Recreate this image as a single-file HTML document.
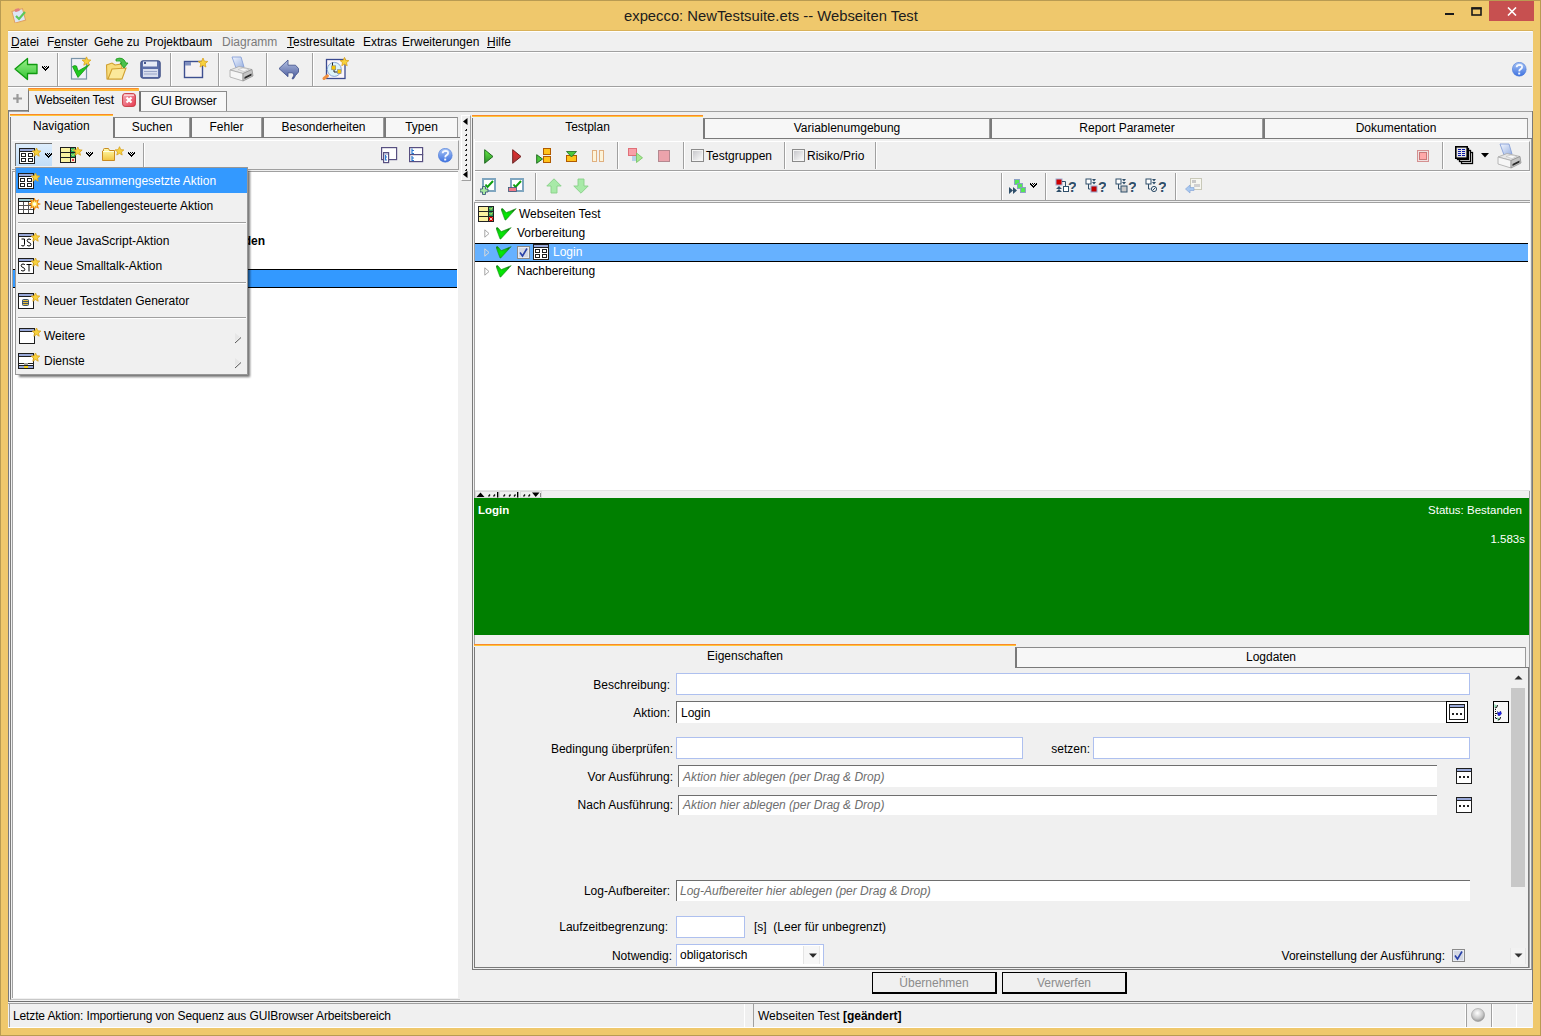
<!DOCTYPE html>
<html><head><meta charset="utf-8">
<style>
*{box-sizing:border-box;margin:0;padding:0}
html,body{width:1541px;height:1036px;overflow:hidden}
body{position:relative;background:#EFC86C;font-family:"Liberation Sans",sans-serif;font-size:12px;color:#000}
.a{position:absolute}
.t{position:absolute;white-space:nowrap;line-height:14px}
.hl{position:absolute;height:1px;background:#A0A0A0}
.vl{position:absolute;width:1px;background:#A0A0A0}
.tab{position:absolute;background:#F7F7F7;border-top:1px solid #8A8A8A;border-left:2px solid #7A7A7A;border-right:1px solid #9A9A9A;text-align:center}
.tabsel{position:absolute;background:#F0F0F0;border-top:2px solid #FDC63C;text-align:center}
.tabsel::before{content:"";position:absolute;left:0;right:0;top:-2px;height:1px;background:#FB8A2A}
.tabsel::after{content:"";position:absolute;left:0;right:0;top:0;height:1px;background:#EEF0F8}
.inp{position:absolute;background:#fff;border:1px solid #AEC0EF}
.inp2{position:absolute;background:#fff;border-top:1px solid #6E6E6E;border-left:1px solid #6E6E6E}
.sep{position:absolute;width:2px;border-left:1px solid #A0A0A0;border-right:1px solid #fff}
</style></head><body>
<!-- outer frame border -->
<div class="a" style="left:0;top:0;width:1541px;height:1036px;border:1px solid #B99B52"></div>

<!-- title bar -->
<div class="t" style="left:624px;top:7px;font-size:14.8px;line-height:18px;color:#1C1C1C">expecco: NewTestsuite.ets -- Webseiten Test</div>
<div class="a" style="left:1489px;top:1px;width:45px;height:20px;background:#C75050"></div>

<!-- client -->
<div class="a" style="left:8px;top:30px;width:1525px;height:998px;background:#F0F0F0;border-top:1px solid #D9B25A"></div>
<div class="a" style="left:8px;top:31px;width:1524px;height:1px;background:#fff"></div>

<!-- menu bar -->
<div class="hl" style="left:8px;top:51px;width:1524px;background:#A0A0A0"></div>
<div class="hl" style="left:8px;top:52px;width:1524px;background:#fff"></div>
<div class="t" style="left:11px;top:35px">Datei</div>
<div class="t" style="left:47px;top:35px">Fenster</div>
<div class="t" style="left:94px;top:35px">Gehe zu</div>
<div class="t" style="left:145px;top:35px">Projektbaum</div>
<div class="t" style="left:222px;top:35px;color:#7A7A7A">Diagramm</div>
<div class="t" style="left:287px;top:35px">Testresultate</div>
<div class="t" style="left:363px;top:35px">Extras</div>
<div class="t" style="left:402px;top:35px">Erweiterungen</div>
<div class="t" style="left:487px;top:35px">Hilfe</div>
<div class="a" style="left:11px;top:47px;width:8px;height:1px;background:#000"></div><div class="a" style="left:54px;top:47px;width:7px;height:1px;background:#000"></div><div class="a" style="left:287px;top:47px;width:7px;height:1px;background:#000"></div><div class="a" style="left:487px;top:47px;width:8px;height:1px;background:#000"></div>

<!-- toolbar -->
<div class="hl" style="left:8px;top:86px;width:1524px;background:#A0A0A0"></div>
<div class="hl" style="left:8px;top:87px;width:1524px;background:#fff"></div>

<!-- main tabs -->
<div class="hl" style="left:8px;top:111px;width:1524px;background:#A0A0A0"></div>

<!-- content container -->
<div class="a" style="left:8px;top:111px;width:1px;height:891px;background:#7A7A7A"></div>
<div class="a" style="left:1532px;top:111px;width:1px;height:891px;background:#7A7A7A"></div>

<!-- LEFT PANEL -->

<!-- left panel frame -->
<div class="a" style="left:10px;top:137px;width:450px;height:863px;border-left:1px solid #7A7A7A;border-bottom:1px solid #C8C8C8"></div>
<!-- left tabs -->
<div class="tabsel" style="left:10px;top:114px;width:103px;height:24px"><span class="t" style="left:23px;top:3px">Navigation</span></div>
<div class="a" style="left:10px;top:117px;width:1px;height:21px;background:#7A7A7A"></div>
<div class="tab" style="left:113px;top:117px;width:77px;height:21px"><span class="t" style="left:0;right:0;top:2px">Suchen</span></div>
<div class="tab" style="left:190px;top:117px;width:72px;height:21px"><span class="t" style="left:0;right:0;top:2px">Fehler</span></div>
<div class="tab" style="left:262px;top:117px;width:122px;height:21px"><span class="t" style="left:0;right:0;top:2px">Besonderheiten</span></div>
<div class="tab" style="left:384px;top:117px;width:74px;height:21px"><span class="t" style="left:0;right:0;top:2px">Typen</span></div>
<div class="hl" style="left:113px;top:137px;width:347px;background:#7A7A7A"></div>
<!-- left inner toolbar -->
<div class="a" style="left:12px;top:140px;width:447px;height:30px;border-top:1px solid #fff;border-right:1px solid #A0A0A0;border-bottom:1px solid #A0A0A0"></div>
<div class="a" style="left:15px;top:143px;width:37px;height:23px;background:linear-gradient(#DDEDFC,#C2DDF7);border-top:1px solid #707070;border-left:1px solid #707070"></div>
<div class="sep" style="left:143px;top:143px;height:26px"></div>
<!-- left tree -->
<div class="a" style="left:12px;top:171px;width:446px;height:827px;background:#fff;border-left:1px solid #A0A0A0;border-top:1px solid #A0A0A0"></div>
<div class="t" style="right:1276px;top:234px;font-weight:bold">Anhänge und Testfunktionen hinzuladen</div>
<div class="a" style="left:13px;top:269px;width:444px;height:19px;background:#3399FF;border-top:1px solid #000;border-bottom:1px solid #000"></div>
<!-- splitter -->
<div class="a" style="left:461px;top:115px;width:10px;height:66px;border-left:1px solid #fff;border-top:1px solid #fff;border-right:1px solid #A0A0A0;border-bottom:1px solid #A0A0A0"></div>


<!-- RIGHT PANEL -->

<!-- right panel outer frame -->
<div class="a" style="left:472px;top:138px;width:1060px;height:832px;border-left:1px solid #7A7A7A;border-right:1px solid #A0A0A0;border-bottom:1px solid #7A7A7A"></div>
<div class="a" style="left:474px;top:202px;width:1056px;height:766px;border-left:1px solid #A0A0A0;border-right:1px solid #A0A0A0;border-bottom:1px solid #A0A0A0"></div>
<div class="a" style="left:474px;top:139px;width:1px;height:62px;background:#fff"></div>
<!-- right tabs -->
<div class="tabsel" style="left:472px;top:115px;width:231px;height:24px"><span class="t" style="left:0;right:0;top:3px">Testplan</span></div>
<div class="a" style="left:472px;top:118px;width:1px;height:21px;background:#7A7A7A"></div>
<div class="tab" style="left:703px;top:118px;width:287px;height:21px"><span class="t" style="left:0;right:0;top:2px">Variablenumgebung</span></div>
<div class="tab" style="left:990px;top:118px;width:273px;height:21px"><span class="t" style="left:0;right:0;top:2px">Report Parameter</span></div>
<div class="tab" style="left:1263px;top:118px;width:265px;height:21px"><span class="t" style="left:0;right:0;top:2px">Dokumentation</span></div>
<div class="hl" style="left:703px;top:138px;width:829px;background:#7A7A7A"></div>
<!-- toolbar 1 -->
<div class="a" style="left:475px;top:141px;width:1055px;height:30px;border-top:1px solid #fff;border-right:1px solid #A0A0A0;border-bottom:1px solid #A0A0A0"></div>
<div class="sep" style="left:784px;top:142px;height:27px"></div>
<div class="sep" style="left:875px;top:142px;height:27px"></div>
<div class="sep" style="left:1442px;top:142px;height:27px"></div>
<div class="t" style="left:706px;top:149px">Testgruppen</div>
<div class="t" style="left:807px;top:149px">Risiko/Prio</div>
<!-- toolbar 2 -->
<div class="a" style="left:475px;top:171px;width:1055px;height:30px;border-top:1px solid #fff;border-bottom:1px solid #A0A0A0"></div>
<div class="sep" style="left:535px;top:173px;height:27px"></div>
<div class="sep" style="left:1001px;top:173px;height:27px"></div>
<div class="sep" style="left:1045px;top:173px;height:27px"></div>
<div class="sep" style="left:1175px;top:173px;height:27px"></div>
<!-- tree -->
<div class="a" style="left:475px;top:202px;width:1055px;height:289px;background:#fff;border-top:1px solid #A0A0A0;border-bottom:1px solid #E3E3E3"></div>
<div class="t" style="left:519px;top:207px">Webseiten Test</div>
<div class="t" style="left:517px;top:226px">Vorbereitung</div>
<div class="a" style="left:475px;top:243px;width:1053px;height:19px;background:#66B1FF;border-top:1px solid #000;border-bottom:1px solid #000"></div>
<div class="t" style="left:553px;top:245px;color:#fff">Login</div>
<div class="t" style="left:517px;top:264px">Nachbereitung</div>
<!-- splitter handle -->
<div class="a" style="left:475px;top:492px;width:66px;height:5px;background:#F0F0F0"></div>
<!-- green result -->
<div class="a" style="left:474px;top:498px;width:1055px;height:137px;background:#007F00"></div>
<div class="t" style="left:478px;top:503px;color:#fff;font-weight:bold;font-size:11.5px">Login</div>
<div class="t" style="right:19px;top:503px;color:#fff;font-size:11.5px">Status: Bestanden</div>
<div class="t" style="right:16px;top:532px;color:#fff;font-size:11.5px">1.583s</div>
<!-- properties tabs -->
<div class="tabsel" style="left:474px;top:644px;width:542px;height:24px"><span class="t" style="left:0;right:0;top:3px">Eigenschaften</span></div>
<div class="a" style="left:474px;top:647px;width:1px;height:21px;background:#7A7A7A"></div>
<div class="tab" style="left:1015px;top:647px;width:511px;height:21px"><span class="t" style="left:0;right:0;top:2px">Logdaten</span></div>
<div class="hl" style="left:1015px;top:667px;width:514px;background:#7A7A7A"></div>
<!-- properties panel -->
<div class="a" style="left:474px;top:667px;width:1055px;height:301px;border-left:1px solid #7A7A7A;border-right:1px solid #7A7A7A;border-bottom:1px solid #7A7A7A"></div>

<div class="t" style="right:871px;top:678px">Beschreibung:</div>
<div class="inp" style="left:676px;top:673px;width:794px;height:22px"></div>
<div class="t" style="right:871px;top:706px">Aktion:</div>
<div class="inp2" style="left:676px;top:701px;width:770px;height:22px"></div>
<div class="t" style="left:681px;top:706px">Login</div>
<div class="t" style="right:868px;top:742px">Bedingung überprüfen:</div>
<div class="inp" style="left:676px;top:737px;width:347px;height:22px"></div>
<div class="t" style="right:451px;top:742px">setzen:</div>
<div class="inp" style="left:1093px;top:737px;width:377px;height:22px"></div>
<div class="t" style="right:868px;top:770px">Vor Ausführung:</div>
<div class="inp2" style="left:678px;top:765px;width:759px;height:22px"></div>
<div class="t" style="left:683px;top:770px;font-style:italic;color:#6E6E6E">Aktion hier ablegen (per Drag &amp; Drop)</div>
<div class="t" style="right:868px;top:798px">Nach Ausführung:</div>
<div class="inp2" style="left:678px;top:795px;width:759px;height:20px"></div>
<div class="t" style="left:683px;top:798px;font-style:italic;color:#6E6E6E">Aktion hier ablegen (per Drag &amp; Drop)</div>
<div class="t" style="right:871px;top:884px">Log-Aufbereiter:</div>
<div class="inp2" style="left:676px;top:880px;width:794px;height:21px"></div>
<div class="t" style="left:680px;top:884px;font-style:italic;color:#6E6E6E">Log-Aufbereiter hier ablegen (per Drag &amp; Drop)</div>
<div class="t" style="right:873px;top:920px">Laufzeitbegrenzung:</div>
<div class="inp" style="left:676px;top:916px;width:69px;height:22px"></div>
<div class="t" style="left:754px;top:920px">[s]&nbsp; (Leer für unbegrenzt)</div>
<div class="t" style="right:869px;top:949px">Notwendig:</div>
<div class="a" style="left:676px;top:944px;width:148px;height:22px;background:#fff;border:1px solid #AEC0EF;border-bottom:none"></div>
<div class="a" style="left:803px;top:946px;width:17px;height:18px;background:#F7F7F7;border-left:1px solid #E4E4E4;border-right:1px solid #E8E8E8"></div>
<div class="t" style="left:680px;top:948px">obligatorisch</div>
<div class="t" style="right:96px;top:949px">Voreinstellung der Ausführung:</div>
<!-- scrollbar -->
<div class="a" style="left:1510px;top:671px;width:16px;height:16px;background:#F0F0F0"></div>
<div class="a" style="left:1511px;top:688px;width:14px;height:199px;background:#C8C8C8"></div>

<!-- buttons -->
<div class="a" style="left:872px;top:972px;width:125px;height:22px;border:2px solid #000;border-width:1px 2px 2px 1px"><span class="t" style="left:0;right:0;top:3px;text-align:center;color:#8C8C8C">Übernehmen</span></div>
<div class="a" style="left:1002px;top:972px;width:125px;height:22px;border:2px solid #000;border-width:1px 2px 2px 1px"><span class="t" style="left:0;right:0;top:3px;text-align:center;color:#8C8C8C">Verwerfen</span></div>


<!-- status bar -->
<div class="hl" style="left:8px;top:1001px;width:1524px;background:#707070"></div>
<div class="hl" style="left:8px;top:1003px;width:1524px;background:#A0A0A0"></div>
<div class="a" style="left:9px;top:1004px;width:736px;height:23px;border-left:1px solid #A0A0A0;border-right:1px solid #fff"></div>
<div class="t" style="left:13px;top:1009px;letter-spacing:-0.13px">Letzte Aktion: Importierung von Sequenz aus GUIBrowser Arbeitsbereich</div>
<div class="a" style="left:753px;top:1004px;width:713px;height:23px;border-left:1px solid #A0A0A0;border-right:1px solid #fff"></div>
<div class="t" style="left:758px;top:1009px">Webseiten Test <b>[geändert]</b></div>
<div class="a" style="left:1466px;top:1004px;width:26px;height:23px;border-left:1px solid #A0A0A0;border-right:1px solid #A0A0A0"></div>
<div class="a" style="left:1492px;top:1004px;width:25px;height:23px;border-left:1px solid #fff;border-right:1px solid #fff"></div>
<div class="hl" style="left:8px;top:1027px;width:1524px;background:#fff"></div>


<svg class="a" style="left:484px;top:149px" width="10" height="15" viewBox="0 0 10 15"><defs><linearGradient id="gp" x1="0" y1="0" x2="0" y2="1"><stop offset="0" stop-color="#66EE44"/><stop offset="1" stop-color="#2A8A2A"/></linearGradient></defs><path d="M0.7,0.7 L9,7.5 L0.7,14.3 Z" fill="url(#gp)" stroke="#1F6A1F" stroke-width="1"/></svg>
<svg class="a" style="left:512px;top:149px" width="10" height="15" viewBox="0 0 10 15"><defs><linearGradient id="rp" x1="0" y1="0" x2="0" y2="1"><stop offset="0" stop-color="#F02A2A"/><stop offset="1" stop-color="#A03A3A"/></linearGradient></defs><path d="M0.7,0.7 L9,7.5 L0.7,14.3 Z" fill="url(#rp)" stroke="#702020" stroke-width="1"/></svg>
<svg class="a" style="left:536px;top:148px" width="16" height="16" viewBox="0 0 16 16"><path d="M0.7,6.7 L6.5,11 L0.7,15.3 Z" fill="#4CC83C" stroke="#1F6A1F" stroke-width="1"/><rect x="7.5" y="0.5" width="7" height="6" fill="#FFC21A" stroke="#B05A00"/><rect x="7.5" y="8.5" width="7" height="6" fill="#FFC21A" stroke="#B05A00"/></svg>
<svg class="a" style="left:566px;top:151px" width="11" height="11" viewBox="0 0 11 11"><rect x="0.5" y="4.5" width="10" height="6" fill="#FFC21A" stroke="#B05A00"/><path d="M0.5,0.5 H10.5 L5.5,6 Z" fill="#4CC83C" stroke="#1F6A1F" stroke-width="0.8"/></svg>
<svg class="a" style="left:592px;top:150px" width="13" height="13" viewBox="0 0 13 13"><rect x="0.5" y="0.5" width="4" height="11" fill="#FDF4DA" stroke="#E0B080"/><rect x="7.5" y="0.5" width="4" height="11" fill="#FDF4DA" stroke="#E0B080"/></svg>
<div class="sep" style="left:617px;top:142px;height:27px"></div>
<svg class="a" style="left:628px;top:148px" width="16" height="16" viewBox="0 0 16 16"><rect x="4" y="8" width="6" height="5" fill="#B8D0E8"/><rect x="0.5" y="0.5" width="8" height="7" fill="#F8A0A8" stroke="#E07078"/><path d="M8.5,5 L14.5,9.8 L8.5,14.5 Z" fill="#A8E890" stroke="#70C060" stroke-width="0.8"/></svg>
<svg class="a" style="left:658px;top:150px" width="13" height="13" viewBox="0 0 13 13"><rect x="0.5" y="0.5" width="11" height="11" fill="#EBA3AC" stroke="#B48890"/></svg>
<div class="sep" style="left:683px;top:142px;height:27px"></div>
<svg class="a" style="left:691px;top:149px" width="13" height="13" viewBox="0 0 13 13"><defs><linearGradient id="cbg" x1="0" y1="0" x2="1" y2="1"><stop offset="0" stop-color="#C8C8CC"/><stop offset="1" stop-color="#FAFAFA"/></linearGradient></defs><rect x="0.5" y="0.5" width="12" height="12" fill="#F4F4F4" stroke="#8A8A8A"/><rect x="2" y="2" width="9" height="9" fill="url(#cbg)"/></svg>
<svg class="a" style="left:792px;top:149px" width="13" height="13" viewBox="0 0 13 13"><defs><linearGradient id="cbg" x1="0" y1="0" x2="1" y2="1"><stop offset="0" stop-color="#C8C8CC"/><stop offset="1" stop-color="#FAFAFA"/></linearGradient></defs><rect x="0.5" y="0.5" width="12" height="12" fill="#F4F4F4" stroke="#8A8A8A"/><rect x="2" y="2" width="9" height="9" fill="url(#cbg)"/></svg>
<svg class="a" style="left:1417px;top:150px" width="12" height="12" viewBox="0 0 12 12"><rect x="0.5" y="0.5" width="11" height="11" fill="#F0E0E0" stroke="#D49090"/><rect x="2.5" y="2.5" width="7" height="7" fill="#FFA8A8" stroke="#C87878"/></svg>
<svg class="a" style="left:1455px;top:146px" width="20" height="19" viewBox="0 0 20 19"><rect x="6.5" y="6.5" width="11" height="11" fill="#fff" stroke="#000" stroke-width="1.3"/><rect x="4.5" y="4.5" width="11" height="11" fill="#fff" stroke="#000" stroke-width="1.3"/><rect x="2.5" y="2.5" width="11" height="11" fill="#fff" stroke="#000" stroke-width="1.3"/><rect x="0.8" y="0.8" width="11.4" height="11.4" fill="#E4E4E4" stroke="#000" stroke-width="1.6"/><g shape-rendering="crispEdges"><rect x="3" y="3" width="3" height="1" fill="#0818A8"/><rect x="7" y="3" width="3" height="1" fill="#0818A8"/><rect x="3" y="5" width="3" height="1" fill="#0818A8"/><rect x="7" y="5" width="3" height="1" fill="#0818A8"/><rect x="3" y="7" width="3" height="1" fill="#0818A8"/><rect x="7" y="7" width="3" height="1" fill="#0818A8"/><rect x="3" y="9" width="3" height="1" fill="#0818A8"/><rect x="7" y="9" width="3" height="1" fill="#0818A8"/></g></svg>
<svg class="a" style="left:1481px;top:153px" width="8" height="5" viewBox="0 0 8 5"><path d="M0,0 H8 L4,4.5 Z" fill="#000"/></svg>
<svg class="a" style="left:1497px;top:143px" width="26" height="26" viewBox="0 0 26 26"><defs><linearGradient id="pg2" x1="0" y1="0" x2="1" y2="1"><stop offset="0" stop-color="#F2F6FF"/><stop offset="1" stop-color="#98B0E0"/></linearGradient></defs><path d="M3,1 L12,1 L15,11 L7,12 Z" fill="url(#pg2)" stroke="#88A0D8" stroke-width="0.9"/><path d="M1,14 L10,10.5 L23,13.5 L14,17.5 Z" fill="#E6E6E6" stroke="#A8A8A8" stroke-width="0.8"/><path d="M9,13.5 L14,12 L20,13.5 L15,15.5 Z" fill="#F8F8F8" stroke="#C0C0C0" stroke-width="0.6"/><path d="M1,14 L14,17.5 L14,25 L1,21 Z" fill="#F6F6F6" stroke="#A8A8A8" stroke-width="0.8"/><path d="M14,17.5 L23,13.5 L24,20 L14,25 Z" fill="#C4C4C4" stroke="#909090" stroke-width="0.8"/><path d="M15.5,21 L22.5,17.5 L22.5,19.5 L15.5,23 Z" fill="#2A2A2A"/></svg>
<svg class="a" style="left:480px;top:178px" width="17" height="17" viewBox="0 0 17 17"><rect x="3" y="1" width="12" height="12" fill="#fff" stroke="#7FA6C0" stroke-width="2"/><path d="M5.5,6.5 L7.5,9 L13,3" fill="none" stroke="#10A010" stroke-width="2"/><path d="M2.5,8.5 H5.5 V11 H8 V14 H5.5 V16.5 H2.5 V14 H0 V11 H2.5 Z" fill="#A8E8A0" stroke="#3A5A7A" stroke-width="0.9"/></svg>
<svg class="a" style="left:508px;top:178px" width="17" height="17" viewBox="0 0 17 17"><rect x="3" y="1" width="12" height="12" fill="#fff" stroke="#7FA6C0" stroke-width="2"/><path d="M5.5,6.5 L7.5,9 L13,3" fill="none" stroke="#10A010" stroke-width="2"/><rect x="0.5" y="9.5" width="8" height="4" fill="#F07A88" stroke="#3A5A7A" stroke-width="0.8"/></svg>
<svg class="a" style="left:546px;top:178px" width="16" height="16" viewBox="0 0 16 16"><path d="M8,0.8 L15.2,8 H11 V15 H5 V8 H0.8 Z" fill="#A8EAA8" stroke="#88D088" stroke-width="0.9"/></svg>
<svg class="a" style="left:573px;top:178px" width="16" height="16" viewBox="0 0 16 16"><path d="M8,15.2 L15.2,8 H11 V1 H5 V8 H0.8 Z" fill="#A8EAA8" stroke="#88D088" stroke-width="0.9"/></svg>
<svg class="a" style="left:1008px;top:178px" width="20" height="17" viewBox="0 0 20 17"><rect x="6.5" y="1.5" width="5" height="5" fill="#55E855" stroke="#8A9AC8" stroke-width="0.9"/><rect x="9.5" y="5.5" width="5" height="5" fill="#55E855" stroke="#8A9AC8" stroke-width="0.9"/><rect x="12.5" y="9.5" width="5" height="5" fill="#55E855" stroke="#8A9AC8" stroke-width="0.9"/><path d="M1,9 L5,12.5 L1,16 Z M5,9 L9,12.5 L5,16 Z" fill="#2F4F6A"/></svg>
<div class="a" style="left:1030px;top:183px;width:1px;height:1px;background:#000"></div><div class="a" style="left:1032px;top:183px;width:1px;height:1px;background:#000"></div><div class="a" style="left:1034px;top:183px;width:1px;height:1px;background:#000"></div><div class="a" style="left:1036px;top:183px;width:1px;height:1px;background:#000"></div><div class="a" style="left:1030px;top:184px;width:1px;height:1px;background:#000"></div><div class="a" style="left:1031px;top:184px;width:1px;height:1px;background:#000"></div><div class="a" style="left:1033px;top:184px;width:1px;height:1px;background:#000"></div><div class="a" style="left:1035px;top:184px;width:1px;height:1px;background:#000"></div><div class="a" style="left:1036px;top:184px;width:1px;height:1px;background:#000"></div><div class="a" style="left:1031px;top:185px;width:1px;height:1px;background:#000"></div><div class="a" style="left:1032px;top:185px;width:1px;height:1px;background:#000"></div><div class="a" style="left:1034px;top:185px;width:1px;height:1px;background:#000"></div><div class="a" style="left:1035px;top:185px;width:1px;height:1px;background:#000"></div><div class="a" style="left:1032px;top:186px;width:1px;height:1px;background:#000"></div><div class="a" style="left:1033px;top:186px;width:1px;height:1px;background:#000"></div><div class="a" style="left:1034px;top:186px;width:1px;height:1px;background:#000"></div><div class="a" style="left:1033px;top:187px;width:1px;height:1px;background:#000"></div>
<svg class="a" style="left:1055px;top:178px" width="21" height="17" viewBox="0 0 21 17"><rect x="1" y="1" width="6" height="6" fill="#D00000" stroke="#9AAAD0" stroke-width="1"/><path d="M7,3.5 H10.5 V8.5" fill="none" stroke="#2F4F6A" stroke-width="1"/><rect x="8.5" y="8.5" width="5" height="5" fill="#fff" stroke="#2F4F6A" stroke-width="1"/><path d="M4,8 L1,11 H7 Z M4,11 L1,14 H7 Z" fill="#2F4F6A"/><text x="13" y="14" font-family="Liberation Sans" font-weight="bold" font-size="14.5" fill="#2F4F6A">?</text></svg>
<svg class="a" style="left:1085px;top:178px" width="21" height="17" viewBox="0 0 21 17"><rect x="1" y="1" width="5" height="5" fill="#fff" stroke="#2F4F6A" stroke-width="1"/><path d="M3.5,6 V11 H5.5" fill="none" stroke="#2F4F6A"/><path d="M7,1 H11 L9,3.5 Z M7,4 H11 L9,6.5 Z" fill="#2F4F6A"/><rect x="6" y="8" width="6" height="6" fill="#C00000" stroke="#9AAAD0" stroke-width="1"/><text x="13" y="14" font-family="Liberation Sans" font-weight="bold" font-size="14.5" fill="#2F4F6A">?</text></svg>
<svg class="a" style="left:1115px;top:178px" width="21" height="17" viewBox="0 0 21 17"><rect x="1" y="1" width="5" height="5" fill="#fff" stroke="#2F4F6A" stroke-width="1"/><path d="M3.5,6 V11 H5.5" fill="none" stroke="#2F4F6A"/><path d="M7,1 H11 L9,3.5 Z M7,4 H11 L9,6.5 Z" fill="#2F4F6A"/><rect x="6" y="8" width="6" height="6" fill="#C8C8C8" stroke="#2F4F6A" stroke-width="1"/><text x="13" y="14" font-family="Liberation Sans" font-weight="bold" font-size="14.5" fill="#2F4F6A">?</text></svg>
<svg class="a" style="left:1145px;top:178px" width="21" height="17" viewBox="0 0 21 17"><rect x="1" y="1" width="5" height="5" fill="#fff" stroke="#2F4F6A" stroke-width="1"/><path d="M3.5,6 V11 H5.5" fill="none" stroke="#2F4F6A"/><path d="M7,1 H11 L9,3.5 Z M7,4 H11 L9,6.5 Z" fill="#2F4F6A"/><circle cx="9" cy="11" r="2.6" fill="none" stroke="#2F4F6A" stroke-width="1"/><path d="M7.5,12.5 L10.5,9.5" stroke="#2F4F6A"/><text x="13" y="14" font-family="Liberation Sans" font-weight="bold" font-size="14.5" fill="#2F4F6A">?</text></svg>
<svg class="a" style="left:1185px;top:178px" width="18" height="16" viewBox="0 0 18 16"><rect x="5.5" y="0.5" width="11" height="11" fill="#F6F6F0" stroke="#C8C8B8"/><rect x="7" y="2" width="4" height="3" fill="#C8C8C8"/><rect x="9" y="6" width="6" height="3" fill="#D0D0D0"/><path d="M0.5,11 L5,7 V9.5 H9 V12.5 H5 V15 Z" fill="#A8C8F0" stroke="#88A8D8" stroke-width="0.7"/></svg>
<svg class="a" style="left:478px;top:206px" width="16" height="16" viewBox="0 0 16 16"><g shape-rendering="crispEdges"><rect x="0.5" y="0.5" width="15" height="15" fill="#FAF0A0" stroke="#222"/><rect x="1" y="5" width="14" height="1" fill="#222"/><rect x="1" y="10" width="14" height="1" fill="#222"/><rect x="10" y="1" width="1" height="14" fill="#222"/><rect x="11" y="1" width="4" height="4" fill="#2A9A5A"/><rect x="11" y="6" width="4" height="4" fill="#2A9A5A"/></g><path d="M11.5,2 L13,3.5 L14.5,1.5 M11.5,7 L13,8.5 L14.5,6.5" stroke="#E8F860" stroke-width="0.9" fill="none"/><circle cx="13" cy="13" r="1.6" fill="#fff" stroke="#E00000" stroke-width="1.2"/></svg>
<svg class="a" style="left:501px;top:208px" width="16" height="13" viewBox="0 0 16 13"><defs><radialGradient id="ck" cx="0.35" cy="0.55" r="0.6"><stop offset="0" stop-color="#00F000"/><stop offset="0.7" stop-color="#10C010"/><stop offset="1" stop-color="#0A7A0A"/></radialGradient></defs><path d="M0,1.2 Q1,0.2 2,0.8 L5.2,4.6 L15.2,0.6 L4.8,12 Q4.2,12.4 3.8,11.6 Z" fill="url(#ck)" stroke="#128A12" stroke-width="0.5"/></svg>
<svg class="a" style="left:496px;top:227px" width="16" height="13" viewBox="0 0 16 13"><defs><radialGradient id="ck" cx="0.35" cy="0.55" r="0.6"><stop offset="0" stop-color="#00F000"/><stop offset="0.7" stop-color="#10C010"/><stop offset="1" stop-color="#0A7A0A"/></radialGradient></defs><path d="M0,1.2 Q1,0.2 2,0.8 L5.2,4.6 L15.2,0.6 L4.8,12 Q4.2,12.4 3.8,11.6 Z" fill="url(#ck)" stroke="#128A12" stroke-width="0.5"/></svg>
<svg class="a" style="left:496px;top:246px" width="16" height="13" viewBox="0 0 16 13"><defs><radialGradient id="ck" cx="0.35" cy="0.55" r="0.6"><stop offset="0" stop-color="#00F000"/><stop offset="0.7" stop-color="#10C010"/><stop offset="1" stop-color="#0A7A0A"/></radialGradient></defs><path d="M0,1.2 Q1,0.2 2,0.8 L5.2,4.6 L15.2,0.6 L4.8,12 Q4.2,12.4 3.8,11.6 Z" fill="url(#ck)" stroke="#128A12" stroke-width="0.5"/></svg>
<svg class="a" style="left:496px;top:265px" width="16" height="13" viewBox="0 0 16 13"><defs><radialGradient id="ck" cx="0.35" cy="0.55" r="0.6"><stop offset="0" stop-color="#00F000"/><stop offset="0.7" stop-color="#10C010"/><stop offset="1" stop-color="#0A7A0A"/></radialGradient></defs><path d="M0,1.2 Q1,0.2 2,0.8 L5.2,4.6 L15.2,0.6 L4.8,12 Q4.2,12.4 3.8,11.6 Z" fill="url(#ck)" stroke="#128A12" stroke-width="0.5"/></svg>
<svg class="a" style="left:484px;top:229px" width="6" height="9" viewBox="0 0 6 9"><path d="M0.8,0.8 L5,4.5 L0.8,8.2 Z" fill="none" stroke="#A6A6A6" stroke-width="1"/></svg>
<svg class="a" style="left:484px;top:248px" width="6" height="9" viewBox="0 0 6 9"><path d="M0.8,0.8 L5,4.5 L0.8,8.2 Z" fill="none" stroke="#D8D8D8" stroke-width="1"/></svg>
<svg class="a" style="left:484px;top:267px" width="6" height="9" viewBox="0 0 6 9"><path d="M0.8,0.8 L5,4.5 L0.8,8.2 Z" fill="none" stroke="#A6A6A6" stroke-width="1"/></svg>
<svg class="a" style="left:517px;top:246px" width="13" height="13" viewBox="0 0 13 13"><rect x="0.5" y="0.5" width="12" height="12" fill="#E8ECF4" stroke="#8A8A8A"/><rect x="2" y="2" width="9" height="9" fill="#D4D8E4"/><path d="M3,6.5 L5.5,10 L10,2.5" fill="none" stroke="#2840A8" stroke-width="1.6"/></svg>
<svg class="a" style="left:533px;top:244px" width="23" height="17" viewBox="0 0 23 17"><g shape-rendering="crispEdges"><rect x="0.5" y="0.5" width="15" height="15" fill="#fff" stroke="#1E1E1E"/><rect x="1" y="1" width="14" height="2" fill="#98A8D8"/><rect x="1" y="3" width="14" height="1" fill="#1E1E1E"/></g><g shape-rendering="crispEdges" fill="none" stroke="#1E1E1E"><rect x="2.5" y="5.5" width="4" height="3"/><rect x="9.5" y="5.5" width="4" height="3"/><rect x="2.5" y="10.5" width="4" height="3"/><rect x="9.5" y="10.5" width="4" height="3"/></g></svg>
<div class="a" style="left:1446px;top:701px;width:22px;height:22px;border:1.3px solid #000;background:#fff"></div>
<svg class="a" style="left:1449px;top:704px" width="16" height="16" viewBox="0 0 16 16"><g shape-rendering="crispEdges"><rect x="0.5" y="0.5" width="15" height="15" fill="#fff" stroke="#1E1E1E"/><rect x="1" y="1" width="14" height="2" fill="#98A8D8"/><rect x="1" y="3" width="14" height="1" fill="#1E1E1E"/><rect x="3" y="9" width="2" height="2" fill="#222"/><rect x="7" y="9" width="2" height="2" fill="#222"/><rect x="11" y="9" width="2" height="2" fill="#222"/></g></svg>
<div class="a" style="left:1493px;top:701px;width:16px;height:22px;border:1.3px solid #000;background:#F8F8F8"></div>
<svg class="a" style="left:1494px;top:703px" width="12" height="18" viewBox="0 0 12 18"><path d="M1.5,6 V15" stroke="#111" stroke-width="1" stroke-dasharray="1,1"/><path d="M1.5,10.5 H3.5 M1.5,15.5 H3.5" stroke="#111" stroke-width="1"/><path d="M0.5,1 L3,3 L0.5,5 Z" fill="#7AD8A8"/><path d="M3.5,2 Q3.5,5 1,5" fill="none" stroke="#111" stroke-width="1"/><path d="M3.5,8.5 L5,10 L6.5,8 L7.5,10.5 L6,12.5 L4,12.5 Z" fill="#1A1AF0" stroke="#101080" stroke-width="0.5"/><path d="M3.5,14 L6,16 L3.5,18 Z" fill="#7AD8A8"/><path d="M6.5,14 Q6.5,17 4,17" fill="none" stroke="#111" stroke-width="1"/></svg>
<svg class="a" style="left:1456px;top:768px" width="17" height="17" viewBox="0 0 17 17"><g shape-rendering="crispEdges"><rect x="0.5" y="0.5" width="15" height="15" fill="#fff" stroke="#1E1E1E"/><rect x="1" y="1" width="14" height="2" fill="#98A8D8"/><rect x="1" y="3" width="14" height="1" fill="#1E1E1E"/><rect x="3" y="8" width="2" height="2" fill="#222"/><rect x="7" y="8" width="2" height="2" fill="#222"/><rect x="11" y="8" width="2" height="2" fill="#222"/></g></svg>
<svg class="a" style="left:1456px;top:797px" width="17" height="17" viewBox="0 0 17 17"><g shape-rendering="crispEdges"><rect x="0.5" y="0.5" width="15" height="15" fill="#fff" stroke="#1E1E1E"/><rect x="1" y="1" width="14" height="2" fill="#98A8D8"/><rect x="1" y="3" width="14" height="1" fill="#1E1E1E"/><rect x="3" y="8" width="2" height="2" fill="#222"/><rect x="7" y="8" width="2" height="2" fill="#222"/><rect x="11" y="8" width="2" height="2" fill="#222"/></g></svg>
<svg class="a" style="left:1452px;top:949px" width="13" height="13" viewBox="0 0 13 13"><rect x="0.5" y="0.5" width="12" height="12" fill="#E8ECF4" stroke="#8A8A8A"/><rect x="2" y="2" width="9" height="9" fill="#D4D8E4"/><path d="M3,6.5 L5.5,10 L10,2.5" fill="none" stroke="#2840A8" stroke-width="1.6"/></svg>
<svg class="a" style="left:809px;top:953px" width="8" height="5" viewBox="0 0 8 5"><path d="M0,0.5 H8 L4,4.8 Z" fill="#2A2A2A"/></svg>
<svg class="a" style="left:1514px;top:675px" width="9" height="5" viewBox="0 0 9 5"><path d="M0.5,4.5 L4.5,0.5 L8.5,4.5 Z" fill="#303030"/></svg>
<div class="a" style="left:1510px;top:948px;width:16px;height:16px;background:#F2F2F2;border-left:1px solid #E6E6E6;border-right:1px solid #E6E6E6"></div>
<svg class="a" style="left:1514px;top:953px" width="9" height="5" viewBox="0 0 9 5"><path d="M0.5,0.5 L4.5,4.5 L8.5,0.5 Z" fill="#303030"/></svg>
<svg class="a" style="left:1471px;top:1008px" width="14" height="14" viewBox="0 0 14 14"><defs><radialGradient id="led" cx="0.45" cy="0.35" r="0.7"><stop offset="0" stop-color="#FFFFFF"/><stop offset="0.6" stop-color="#C8C8C8"/><stop offset="1" stop-color="#8A8A8A"/></radialGradient></defs><circle cx="7" cy="7" r="6.5" fill="url(#led)" stroke="#909090" stroke-width="0.5"/></svg>
<svg class="a" style="left:475px;top:491px" width="68" height="7" viewBox="0 0 68 7"><g fill="none" stroke="#DADADA" stroke-width="1"><rect x="0.5" y="0.5" width="23" height="6"/><rect x="24.5" y="0.5" width="19" height="6"/><rect x="45.5" y="0.5" width="21" height="6"/></g><path d="M1.5,6 L5.5,1.5 L9.5,6 Z M57,1.5 L64.5,1.5 L60.75,6 Z" fill="#000"/><path d="M13.5,5.5 L15.0,3.5" stroke="#111" stroke-width="1.3"/><path d="M18.5,5.5 L20.0,3.5" stroke="#111" stroke-width="1.3"/><path d="M28.5,5.5 L30.0,3.5" stroke="#111" stroke-width="1.3"/><path d="M34,5.5 L35.5,3.5" stroke="#111" stroke-width="1.3"/><path d="M39,5.5 L40.5,3.5" stroke="#111" stroke-width="1.3"/><path d="M48.5,5.5 L50.0,3.5" stroke="#111" stroke-width="1.3"/><path d="M53.5,5.5 L55.0,3.5" stroke="#111" stroke-width="1.3"/><rect x="22" y="1" width="1.3" height="5.5" fill="#000"/><rect x="42" y="1" width="1.3" height="5.5" fill="#000"/><rect x="65" y="2" width="1" height="4" fill="#888"/></svg>

<!-- popup menu -->
<div class="a" style="left:19px;top:171px;width:231px;height:206px;background:rgba(0,0,0,0.55);filter:blur(1.2px)"></div>
<div class="a" style="left:15px;top:167px;width:233px;height:208px;background:#F0F0F0;border:1px solid #979797"></div>
<div class="a" style="left:16px;top:168px;width:231px;height:25px;background:#3399FF"></div>
<div class="t" style="left:44px;top:174px;color:#fff">Neue zusammengesetzte Aktion</div>
<div class="t" style="left:44px;top:199px">Neue Tabellengesteuerte Aktion</div>
<div class="a" style="left:18px;top:222px;width:228px;height:2px;border-top:1px solid #A0A0A0;border-bottom:1px solid #fff"></div>
<div class="t" style="left:44px;top:234px">Neue JavaScript-Aktion</div>
<div class="t" style="left:44px;top:259px">Neue Smalltalk-Aktion</div>
<div class="a" style="left:18px;top:282px;width:228px;height:2px;border-top:1px solid #A0A0A0;border-bottom:1px solid #fff"></div>
<div class="t" style="left:44px;top:294px">Neuer Testdaten Generator</div>
<div class="a" style="left:18px;top:317px;width:228px;height:2px;border-top:1px solid #A0A0A0;border-bottom:1px solid #fff"></div>
<div class="t" style="left:44px;top:329px">Weitere</div>
<div class="t" style="left:44px;top:354px">Dienste</div>
<svg class="a" style="left:10px;top:7px" width="17" height="16" viewBox="0 0 17 16"><g transform="rotate(-15 8 8)"><rect x="3" y="3" width="11" height="12" fill="#DCE6F5" stroke="#E0A060"/><rect x="6" y="1.5" width="5" height="3" rx="1" fill="#E08080"/></g><path d="M6,9 L9,12 L15,5" fill="none" stroke="#5BC85B" stroke-width="2.2"/></svg>
<svg class="a" style="left:1445px;top:13px" width="9" height="3" viewBox="0 0 9 3"><rect x="0" y="0" width="9" height="2" fill="#1A1A1A"/></svg>
<svg class="a" style="left:1471px;top:7px" width="11" height="9" viewBox="0 0 11 9"><rect x="1" y="1" width="9" height="7" fill="none" stroke="#1A1A1A" stroke-width="1.6"/><rect x="0.5" y="0.5" width="10" height="2" fill="#1A1A1A"/></svg>
<svg class="a" style="left:1507px;top:7px" width="10" height="9" viewBox="0 0 10 9"><path d="M1,0.5 L9,8.5 M9,0.5 L1,8.5" stroke="#fff" stroke-width="1.6"/></svg>
<svg class="a" style="left:14px;top:57px" width="24" height="24" viewBox="0 0 24 24"><defs><linearGradient id="ga" x1="0" y1="0" x2="0" y2="1"><stop offset="0" stop-color="#9BF08B"/><stop offset="1" stop-color="#33C433"/></linearGradient></defs><path d="M1,12 L13.5,1.5 L13.5,7.5 L23,7.5 L23,16.5 L13.5,16.5 L13.5,22.5 Z" fill="url(#ga)" stroke="#109A10" stroke-width="1.3" stroke-linejoin="round"/></svg>
<div class="a" style="left:42px;top:66px;width:1px;height:1px;background:#000"></div><div class="a" style="left:44px;top:66px;width:1px;height:1px;background:#000"></div><div class="a" style="left:46px;top:66px;width:1px;height:1px;background:#000"></div><div class="a" style="left:48px;top:66px;width:1px;height:1px;background:#000"></div><div class="a" style="left:42px;top:67px;width:1px;height:1px;background:#000"></div><div class="a" style="left:43px;top:67px;width:1px;height:1px;background:#000"></div><div class="a" style="left:45px;top:67px;width:1px;height:1px;background:#000"></div><div class="a" style="left:47px;top:67px;width:1px;height:1px;background:#000"></div><div class="a" style="left:48px;top:67px;width:1px;height:1px;background:#000"></div><div class="a" style="left:43px;top:68px;width:1px;height:1px;background:#000"></div><div class="a" style="left:44px;top:68px;width:1px;height:1px;background:#000"></div><div class="a" style="left:46px;top:68px;width:1px;height:1px;background:#000"></div><div class="a" style="left:47px;top:68px;width:1px;height:1px;background:#000"></div><div class="a" style="left:44px;top:69px;width:1px;height:1px;background:#000"></div><div class="a" style="left:45px;top:69px;width:1px;height:1px;background:#000"></div><div class="a" style="left:46px;top:69px;width:1px;height:1px;background:#000"></div><div class="a" style="left:45px;top:70px;width:1px;height:1px;background:#000"></div>
<div class="sep" style="left:57px;top:53px;height:33px"></div>
<svg class="a" style="left:70px;top:56px" width="23" height="25" viewBox="0 0 23 25"><rect x="1.5" y="2.5" width="15" height="20.5" fill="#F0F0F6" stroke="#7A94A8" stroke-width="1.2"/><rect x="3" y="23" width="14" height="1" fill="#A8B4C0"/><path d="M2.5,10.5 Q4.5,9 6.5,10 L8.2,15 L19.5,8.5 L8,21.5 Z" fill="#1FC81F" stroke="#0A8A0A" stroke-width="0.7"/><polygon points="16.50,0.90 17.72,3.83 20.87,4.08 18.47,6.14 19.20,9.22 16.50,7.57 13.80,9.22 14.53,6.14 12.13,4.08 15.28,3.83" fill="#F7D23E" stroke="#D9A21B" stroke-width="0.8"/></svg>
<svg class="a" style="left:105px;top:55px" width="24" height="26" viewBox="0 0 24 26"><path d="M1.5,10 L7,8 L10,10 L17,9 L16,24 L2,24 Z" fill="#F8DC7A" stroke="#D0A030" stroke-width="1.1"/><path d="M3,24 L7,14 L21,13 L17,24 Z" fill="#FBE89A" stroke="#D0A030" stroke-width="1.1"/><path d="M11,4 Q18,1 21,8 L23,8 L19,13 L15,8 L17,8 Q15,5 11,6 Z" fill="#4CC04C" stroke="#199A19" stroke-width="0.8"/></svg>
<svg class="a" style="left:140px;top:60px" width="21" height="19" viewBox="0 0 21 19"><rect x="0.8" y="0.8" width="19.4" height="17.4" rx="2" fill="#5C6FA8" stroke="#3A4A80" stroke-width="1"/><rect x="3" y="1.5" width="14" height="5" fill="#E8ECF6"/><rect x="4" y="2" width="2" height="2" fill="#4A5A90"/><rect x="3" y="9" width="15" height="8" fill="#D8DEEE"/><path d="M4,11.5 H17 M4,14 H17" stroke="#9AA6C8" stroke-width="1"/></svg>
<div class="sep" style="left:170px;top:53px;height:33px"></div>
<svg class="a" style="left:183px;top:58px" width="26" height="21" viewBox="0 0 26 21"><rect x="1.5" y="3.5" width="18" height="16" fill="#F6F2F4" stroke="#3E4F90" stroke-width="1.4"/><rect x="2" y="4" width="6" height="3.5" fill="#8090C0"/><polygon points="20.00,0.00 21.32,3.18 24.76,3.45 22.14,5.70 22.94,9.05 20.00,7.25 17.06,9.05 17.86,5.70 15.24,3.45 18.68,3.18" fill="#F7D23E" stroke="#D9A21B" stroke-width="0.8"/></svg>
<div class="sep" style="left:218px;top:53px;height:33px"></div>
<svg class="a" style="left:229px;top:56px" width="26" height="26" viewBox="0 0 26 26"><defs><linearGradient id="pg1" x1="0" y1="0" x2="1" y2="1"><stop offset="0" stop-color="#F2F6FF"/><stop offset="1" stop-color="#98B0E0"/></linearGradient></defs><path d="M3,1 L12,1 L15,11 L7,12 Z" fill="url(#pg1)" stroke="#88A0D8" stroke-width="0.9"/><path d="M1,14 L10,10.5 L23,13.5 L14,17.5 Z" fill="#E6E6E6" stroke="#A8A8A8" stroke-width="0.8"/><path d="M9,13.5 L14,12 L20,13.5 L15,15.5 Z" fill="#F8F8F8" stroke="#C0C0C0" stroke-width="0.6"/><path d="M1,14 L14,17.5 L14,25 L1,21 Z" fill="#F6F6F6" stroke="#A8A8A8" stroke-width="0.8"/><path d="M14,17.5 L23,13.5 L24,20 L14,25 Z" fill="#C4C4C4" stroke="#909090" stroke-width="0.8"/><path d="M15.5,21 L22.5,17.5 L22.5,19.5 L15.5,23 Z" fill="#2A2A2A"/></svg>
<div class="sep" style="left:266px;top:53px;height:33px"></div>
<svg class="a" style="left:278px;top:59px" width="22" height="21" viewBox="0 0 22 21"><defs><linearGradient id="ug" x1="0" y1="0" x2="0" y2="1"><stop offset="0" stop-color="#B4C2E4"/><stop offset="1" stop-color="#48589A"/></linearGradient></defs><path d="M1,9.6 L10,1 L10,6.2 L17.5,6.2 L20.5,9.5 L20.5,13 L17.5,16.5 L15.5,19.8 L14,19.8 L16,16 L14.5,13.8 L10,13.8 L10,17.7 Z" fill="url(#ug)" stroke="#3C4C88" stroke-width="0.8" stroke-linejoin="round"/></svg>
<div class="sep" style="left:312px;top:53px;height:33px"></div>
<svg class="a" style="left:321px;top:57px" width="28" height="24" viewBox="0 0 28 24"><rect x="5.5" y="2.5" width="18.5" height="19" fill="#FBF6FA" stroke="#3A4A90" stroke-width="1.3"/><circle cx="13.3" cy="12.4" r="7" fill="#DDF4FA" stroke="#8AA8D8" stroke-width="1"/><path d="M11.5,5.5 V8.8 M13,12.8 V15 H16.5" stroke="#222" stroke-width="1" fill="none"/><rect x="10.7" y="8.8" width="4" height="4" fill="#F8C800" stroke="#808080" stroke-width="0.6"/><rect x="16.5" y="12.7" width="3.6" height="3.8" fill="#F8C800" stroke="#808080" stroke-width="0.6"/><path d="M3,21.5 L6.5,18.8" stroke="#F09040" stroke-width="3" stroke-linecap="round"/><polygon points="23.50,0.40 24.72,3.33 27.87,3.58 25.47,5.64 26.20,8.72 23.50,7.07 20.80,8.72 21.53,5.64 19.13,3.58 22.28,3.33" fill="#F7D23E" stroke="#D9A21B" stroke-width="0.8"/></svg>
<svg class="a" style="left:1512px;top:62px" width="15" height="15" viewBox="0 0 15 15"><defs><linearGradient id="hg" x1="0" y1="0" x2="0" y2="1"><stop offset="0" stop-color="#A8C4F4"/><stop offset="1" stop-color="#3E72E0"/></linearGradient></defs><circle cx="7.25" cy="7.25" r="6.9" fill="url(#hg)" stroke="#4A78D8" stroke-width="0.6"/><path d="M4.6,5.2 Q4.8,2.8 7.6,2.8 Q10.2,2.9 10.1,5.1 Q10,6.6 8.3,7.4 Q7.3,7.9 7.2,9.4" fill="none" stroke="#F4F8FF" stroke-width="1.8"/><rect x="6.2" y="10.6" width="2" height="1.9" fill="#F4F8FF"/></svg>
<div class="a" style="left:28px;top:88px;width:111px;height:24px;background:#F0F0F0;border-left:1px solid #7A7A7A;border-top:3px solid #FDB93B"></div>
<div class="a" style="left:29px;top:88px;width:109px;height:1px;background:#FB8B2B"></div>
<div class="a" style="left:8px;top:110px;width:20px;height:1px;background:#7A7A7A"></div>
<svg class="a" style="left:13px;top:94px" width="9" height="9" viewBox="0 0 9 9"><path d="M4.5,0 V9 M0,4.5 H9" stroke="#9A9A9A" stroke-width="2.2"/></svg>
<div class="t" style="left:35px;top:93px;letter-spacing:-0.2px">Webseiten Test</div>
<svg class="a" style="left:122px;top:93px" width="14" height="14" viewBox="0 0 14 14"><defs><linearGradient id="cg" x1="0" y1="0" x2="1" y2="1"><stop offset="0" stop-color="#F2B0B8"/><stop offset="1" stop-color="#E83850"/></linearGradient></defs><rect x="0.6" y="0.6" width="12.8" height="12.8" rx="2.5" fill="url(#cg)" stroke="#C83A40" stroke-width="1"/><rect x="2" y="1.5" width="10" height="1.3" fill="#FBE0E4"/><path d="M4.5,4.5 L9.5,9.5 M9.5,4.5 L4.5,9.5" stroke="#fff" stroke-width="2.2"/></svg>
<div class="a" style="left:139px;top:91px;width:88px;height:20px;background:#F7F7F7;border-top:1px solid #8A8A8A;border-left:2px solid #707070;border-right:1px solid #8A8A8A"></div>
<div class="t" style="left:151px;top:94px;letter-spacing:-0.3px">GUI Browser</div>
<svg class="a" style="left:19px;top:148px" width="23" height="17" viewBox="0 0 23 17"><g shape-rendering="crispEdges"><rect x="0.5" y="0.5" width="15" height="15" fill="#fff" stroke="#1E1E1E"/><rect x="1" y="1" width="14" height="2" fill="#98A8D8"/><rect x="1" y="3" width="14" height="1" fill="#1E1E1E"/></g><g shape-rendering="crispEdges" fill="none" stroke="#1E1E1E"><rect x="2.5" y="5.5" width="4" height="3"/><rect x="9.5" y="5.5" width="4" height="3"/><rect x="2.5" y="10.5" width="4" height="3"/><rect x="9.5" y="10.5" width="4" height="3"/></g><polygon points="17.50,-0.10 18.72,2.83 21.87,3.08 19.47,5.14 20.20,8.22 17.50,6.57 14.80,8.22 15.53,5.14 13.13,3.08 16.28,2.83" fill="#F7D23E" stroke="#D9A21B" stroke-width="0.8"/></svg>
<div class="a" style="left:45px;top:153px;width:1px;height:1px;background:#000"></div><div class="a" style="left:47px;top:153px;width:1px;height:1px;background:#000"></div><div class="a" style="left:49px;top:153px;width:1px;height:1px;background:#000"></div><div class="a" style="left:51px;top:153px;width:1px;height:1px;background:#000"></div><div class="a" style="left:45px;top:154px;width:1px;height:1px;background:#000"></div><div class="a" style="left:46px;top:154px;width:1px;height:1px;background:#000"></div><div class="a" style="left:48px;top:154px;width:1px;height:1px;background:#000"></div><div class="a" style="left:50px;top:154px;width:1px;height:1px;background:#000"></div><div class="a" style="left:51px;top:154px;width:1px;height:1px;background:#000"></div><div class="a" style="left:46px;top:155px;width:1px;height:1px;background:#000"></div><div class="a" style="left:47px;top:155px;width:1px;height:1px;background:#000"></div><div class="a" style="left:49px;top:155px;width:1px;height:1px;background:#000"></div><div class="a" style="left:50px;top:155px;width:1px;height:1px;background:#000"></div><div class="a" style="left:47px;top:156px;width:1px;height:1px;background:#000"></div><div class="a" style="left:48px;top:156px;width:1px;height:1px;background:#000"></div><div class="a" style="left:49px;top:156px;width:1px;height:1px;background:#000"></div><div class="a" style="left:48px;top:157px;width:1px;height:1px;background:#000"></div>
<svg class="a" style="left:60px;top:147px" width="23" height="17" viewBox="0 0 23 17"><g shape-rendering="crispEdges"><rect x="0.5" y="0.5" width="15" height="15" fill="#FAF2A0" stroke="#1E1E1E"/><rect x="1" y="5" width="14" height="1" fill="#1E1E1E"/><rect x="1" y="10" width="14" height="1" fill="#1E1E1E"/><rect x="10" y="1" width="1" height="14" fill="#1E1E1E"/><rect x="11" y="1" width="4" height="4" fill="#2AAA5A"/><rect x="11" y="6" width="4" height="4" fill="#2AAA5A"/></g><path d="M11.5,2 L13,3.8 L14.5,1.5 M11.5,7 L13,8.8 L14.5,6.5" stroke="#E8F870" stroke-width="0.9" fill="none"/><circle cx="13" cy="13" r="1.5" fill="#E00000" stroke="#fff" stroke-width="0.8"/><polygon points="17.80,-0.10 19.02,2.83 22.17,3.08 19.77,5.14 20.50,8.22 17.80,6.57 15.10,8.22 15.83,5.14 13.43,3.08 16.58,2.83" fill="#F7D23E" stroke="#D9A21B" stroke-width="0.8"/></svg>
<div class="a" style="left:86px;top:152px;width:1px;height:1px;background:#000"></div><div class="a" style="left:88px;top:152px;width:1px;height:1px;background:#000"></div><div class="a" style="left:90px;top:152px;width:1px;height:1px;background:#000"></div><div class="a" style="left:92px;top:152px;width:1px;height:1px;background:#000"></div><div class="a" style="left:86px;top:153px;width:1px;height:1px;background:#000"></div><div class="a" style="left:87px;top:153px;width:1px;height:1px;background:#000"></div><div class="a" style="left:89px;top:153px;width:1px;height:1px;background:#000"></div><div class="a" style="left:91px;top:153px;width:1px;height:1px;background:#000"></div><div class="a" style="left:92px;top:153px;width:1px;height:1px;background:#000"></div><div class="a" style="left:87px;top:154px;width:1px;height:1px;background:#000"></div><div class="a" style="left:88px;top:154px;width:1px;height:1px;background:#000"></div><div class="a" style="left:90px;top:154px;width:1px;height:1px;background:#000"></div><div class="a" style="left:91px;top:154px;width:1px;height:1px;background:#000"></div><div class="a" style="left:88px;top:155px;width:1px;height:1px;background:#000"></div><div class="a" style="left:89px;top:155px;width:1px;height:1px;background:#000"></div><div class="a" style="left:90px;top:155px;width:1px;height:1px;background:#000"></div><div class="a" style="left:89px;top:156px;width:1px;height:1px;background:#000"></div>
<svg class="a" style="left:102px;top:144px" width="23" height="18" viewBox="0 0 23 18"><defs><linearGradient id="fg" x1="0" y1="0" x2="0" y2="1"><stop offset="0" stop-color="#FFFFB0"/><stop offset="1" stop-color="#F2C440"/></linearGradient></defs><path d="M1.5,7 V5.5 Q1.5,4.5 2.5,4.5 H6.5 L7.5,6.5 H12.5 V16.5 H0.5 V7 Z" fill="url(#fg)" stroke="#C88A20" stroke-width="1"/><path d="M1,7.5 H12" stroke="#FFFFE0" stroke-width="1"/><polygon points="17.50,2.70 18.72,5.63 21.87,5.88 19.47,7.94 20.20,11.02 17.50,9.37 14.80,11.02 15.53,7.94 13.13,5.88 16.28,5.63" fill="#F7D23E" stroke="#D9A21B" stroke-width="0.8"/></svg>
<div class="a" style="left:128px;top:152px;width:1px;height:1px;background:#000"></div><div class="a" style="left:130px;top:152px;width:1px;height:1px;background:#000"></div><div class="a" style="left:132px;top:152px;width:1px;height:1px;background:#000"></div><div class="a" style="left:134px;top:152px;width:1px;height:1px;background:#000"></div><div class="a" style="left:128px;top:153px;width:1px;height:1px;background:#000"></div><div class="a" style="left:129px;top:153px;width:1px;height:1px;background:#000"></div><div class="a" style="left:131px;top:153px;width:1px;height:1px;background:#000"></div><div class="a" style="left:133px;top:153px;width:1px;height:1px;background:#000"></div><div class="a" style="left:134px;top:153px;width:1px;height:1px;background:#000"></div><div class="a" style="left:129px;top:154px;width:1px;height:1px;background:#000"></div><div class="a" style="left:130px;top:154px;width:1px;height:1px;background:#000"></div><div class="a" style="left:132px;top:154px;width:1px;height:1px;background:#000"></div><div class="a" style="left:133px;top:154px;width:1px;height:1px;background:#000"></div><div class="a" style="left:130px;top:155px;width:1px;height:1px;background:#000"></div><div class="a" style="left:131px;top:155px;width:1px;height:1px;background:#000"></div><div class="a" style="left:132px;top:155px;width:1px;height:1px;background:#000"></div><div class="a" style="left:131px;top:156px;width:1px;height:1px;background:#000"></div>
<svg class="a" style="left:381px;top:147px" width="17" height="17" viewBox="0 0 17 17"><rect x="0.6" y="0.6" width="15" height="12" fill="#fff" stroke="#574F80" stroke-width="1.2"/><rect x="2.6" y="5.6" width="5" height="10" fill="#fff" stroke="#574F80" stroke-width="1.2"/><rect x="3.2" y="6.2" width="3.8" height="1.5" fill="#A8B0D0"/><path d="M4.5,8 V13.5 M4.5,10 H6 M4.5,13 H6" stroke="#2A78D0" stroke-width="1.2" fill="none"/></svg>
<svg class="a" style="left:409px;top:147px" width="15" height="16" viewBox="0 0 15 16"><rect x="0.6" y="0.6" width="13" height="7" fill="#fff" stroke="#574F80" stroke-width="1.2"/><rect x="0.6" y="7.6" width="13" height="7" fill="#fff" stroke="#574F80" stroke-width="1.2"/><path d="M3,1.5 V6.5 H5 M3,3.5 H5 M3,9 V13.5 H5 M3,11 H5" stroke="#2A78D0" stroke-width="1.2" fill="none"/></svg>
<svg class="a" style="left:438px;top:148px" width="15" height="15" viewBox="0 0 15 15"><defs><linearGradient id="hg2" x1="0" y1="0" x2="0" y2="1"><stop offset="0" stop-color="#A8C4F4"/><stop offset="1" stop-color="#3E72E0"/></linearGradient></defs><circle cx="7.25" cy="7.25" r="6.9" fill="url(#hg2)" stroke="#4A78D8" stroke-width="0.6"/><path d="M4.6,5.2 Q4.8,2.8 7.6,2.8 Q10.2,2.9 10.1,5.1 Q10,6.6 8.3,7.4 Q7.3,7.9 7.2,9.4" fill="none" stroke="#F4F8FF" stroke-width="1.8"/><rect x="6.2" y="10.6" width="2" height="1.9" fill="#F4F8FF"/></svg>
<svg class="a" style="left:462px;top:117px" width="8" height="64" viewBox="0 0 8 64"><path d="M5.5,1 L5.5,8 L1,4.5 Z" fill="#000"/><path d="M5.5,54 L5.5,61 L1,57.5 Z" fill="#000"/><rect x="4" y="12" width="1" height="1" fill="#000"/><rect x="3" y="13" width="2" height="1" fill="#333"/><rect x="4" y="17" width="1" height="1" fill="#000"/><rect x="3" y="18" width="2" height="1" fill="#333"/><rect x="4" y="22" width="1" height="1" fill="#000"/><rect x="3" y="23" width="2" height="1" fill="#333"/><rect x="4" y="27" width="1" height="1" fill="#000"/><rect x="3" y="28" width="2" height="1" fill="#333"/><rect x="4" y="32" width="1" height="1" fill="#000"/><rect x="3" y="33" width="2" height="1" fill="#333"/><rect x="4" y="37" width="1" height="1" fill="#000"/><rect x="3" y="38" width="2" height="1" fill="#333"/><rect x="4" y="42" width="1" height="1" fill="#000"/><rect x="3" y="43" width="2" height="1" fill="#333"/><rect x="4" y="47" width="1" height="1" fill="#000"/><rect x="3" y="48" width="2" height="1" fill="#333"/><rect x="4" y="52" width="1" height="1" fill="#000"/><rect x="3" y="53" width="2" height="1" fill="#333"/></svg>
<svg class="a" style="left:18px;top:173px" width="23" height="17" viewBox="0 0 23 17"><g shape-rendering="crispEdges"><rect x="0.5" y="0.5" width="15" height="15" fill="#fff" stroke="#1E1E1E"/><rect x="1" y="1" width="14" height="2" fill="#98A8D8"/><rect x="1" y="3" width="14" height="1" fill="#1E1E1E"/></g><g shape-rendering="crispEdges" fill="none" stroke="#1E1E1E"><rect x="2.5" y="5.5" width="4" height="3"/><rect x="9.5" y="5.5" width="4" height="3"/><rect x="2.5" y="10.5" width="4" height="3"/><rect x="9.5" y="10.5" width="4" height="3"/></g><polygon points="17.50,-0.10 18.72,2.83 21.87,3.08 19.47,5.14 20.20,8.22 17.50,6.57 14.80,8.22 15.53,5.14 13.13,3.08 16.28,2.83" fill="#F7D23E" stroke="#D9A21B" stroke-width="0.8"/></svg>
<svg class="a" style="left:18px;top:198px" width="23" height="17" viewBox="0 0 23 17"><g shape-rendering="crispEdges"><rect x="0.5" y="0.5" width="15" height="15" fill="#fff" stroke="#1E1E1E"/><rect x="1" y="1" width="14" height="2" fill="#9CC9CE"/><rect x="1" y="3" width="14" height="1" fill="#1E1E1E"/></g><g shape-rendering="crispEdges"><rect x="5" y="4" width="1" height="11" fill="#555"/><rect x="10" y="4" width="1" height="11" fill="#555"/><rect x="1" y="7" width="14" height="1" fill="#555"/><rect x="1" y="11" width="14" height="1" fill="#555"/></g><polygon points="21.70,6.00 19.14,7.09 20.18,9.68 17.59,8.64 16.50,11.20 15.41,8.64 12.82,9.68 13.86,7.09 11.30,6.00 13.86,4.91 12.82,2.32 15.41,3.36 16.50,0.80 17.59,3.36 20.18,2.32 19.14,4.91" fill="#FFF27A" stroke="#F08A10" stroke-width="1.1"/><circle cx="16.5" cy="6" r="1.56" fill="#FFFDF0"/></svg>
<svg class="a" style="left:18px;top:233px" width="23" height="17" viewBox="0 0 23 17"><g shape-rendering="crispEdges"><rect x="0.5" y="0.5" width="15" height="15" fill="#fff" stroke="#1E1E1E"/><rect x="1" y="1" width="14" height="2" fill="#98A8D8"/><rect x="1" y="3" width="14" height="1" fill="#1E1E1E"/></g><path d="M3.5,6 H6.5 V11.5 Q6.5,13 5,13 Q3.5,13 3.5,12" fill="none" stroke="#000" stroke-width="1"/><path d="M13,7 Q12.5,6 11,6 Q9.2,6 9.2,7.5 Q9.2,9 11,9.5 Q12.8,10 12.8,11.5 Q12.8,13 11,13 Q9.5,13 9,12" fill="none" stroke="#000" stroke-width="1"/><polygon points="17.50,-0.10 18.72,2.83 21.87,3.08 19.47,5.14 20.20,8.22 17.50,6.57 14.80,8.22 15.53,5.14 13.13,3.08 16.28,2.83" fill="#F7D23E" stroke="#D9A21B" stroke-width="0.8"/></svg>
<svg class="a" style="left:18px;top:258px" width="23" height="17" viewBox="0 0 23 17"><g shape-rendering="crispEdges"><rect x="0.5" y="0.5" width="15" height="15" fill="#fff" stroke="#1E1E1E"/><rect x="1" y="1" width="14" height="2" fill="#98A8D8"/><rect x="1" y="3" width="14" height="1" fill="#1E1E1E"/></g><path d="M7,7 Q6.5,6 5,6 Q3.2,6 3.2,7.5 Q3.2,9 5,9.5 Q6.8,10 6.8,11.5 Q6.8,13 5,13 Q3.5,13 3,12" fill="none" stroke="#000" stroke-width="1"/><path d="M8.5,6.5 H13.5 M11,6.5 V13.5" fill="none" stroke="#000" stroke-width="1"/><polygon points="17.50,-0.10 18.72,2.83 21.87,3.08 19.47,5.14 20.20,8.22 17.50,6.57 14.80,8.22 15.53,5.14 13.13,3.08 16.28,2.83" fill="#F7D23E" stroke="#D9A21B" stroke-width="0.8"/></svg>
<svg class="a" style="left:18px;top:293px" width="23" height="17" viewBox="0 0 23 17"><g shape-rendering="crispEdges"><rect x="0.5" y="0.5" width="15" height="15" fill="#fff" stroke="#1E1E1E"/><rect x="1" y="1" width="14" height="2" fill="#98A8D8"/><rect x="1" y="3" width="14" height="1" fill="#1E1E1E"/></g><rect x="4" y="6" width="7" height="7" rx="2" fill="#3E566E"/><path d="M5,7.5 H10 M5,9.5 H10 M5,11.5 H10" stroke="#E8C040" stroke-width="1"/><polygon points="17.50,-0.10 18.72,2.83 21.87,3.08 19.47,5.14 20.20,8.22 17.50,6.57 14.80,8.22 15.53,5.14 13.13,3.08 16.28,2.83" fill="#F7D23E" stroke="#D9A21B" stroke-width="0.8"/></svg>
<svg class="a" style="left:19px;top:328px" width="23" height="17" viewBox="0 0 23 17"><g shape-rendering="crispEdges"><rect x="0.5" y="0.5" width="15" height="15" fill="#fff" stroke="#1E1E1E"/><rect x="1" y="1" width="14" height="2" fill="#98A8D8"/><rect x="1" y="3" width="14" height="1" fill="#1E1E1E"/></g><polygon points="17.50,-0.10 18.72,2.83 21.87,3.08 19.47,5.14 20.20,8.22 17.50,6.57 14.80,8.22 15.53,5.14 13.13,3.08 16.28,2.83" fill="#F7D23E" stroke="#D9A21B" stroke-width="0.8"/></svg>
<svg class="a" style="left:18px;top:353px" width="23" height="17" viewBox="0 0 23 17"><g shape-rendering="crispEdges"><rect x="0.5" y="0.5" width="15" height="15" fill="#fff" stroke="#1E1E1E"/><rect x="1" y="1" width="14" height="2" fill="#98A8D8"/><rect x="1" y="3" width="14" height="1" fill="#1E1E1E"/></g><g shape-rendering="crispEdges"><rect x="1" y="10" width="14" height="1" fill="#1E1E1E"/><rect x="1" y="11" width="14" height="4" fill="#fff"/><rect x="0" y="12" width="16" height="4" fill="#1E1E1E"/><rect x="1" y="13" width="14" height="2" fill="#98A8D8"/><rect x="6" y="13" width="4" height="2" fill="#F2D020"/><rect x="6" y="10" width="4" height="2" fill="#A0A0A0"/></g><polygon points="17.50,-0.10 18.72,2.83 21.87,3.08 19.47,5.14 20.20,8.22 17.50,6.57 14.80,8.22 15.53,5.14 13.13,3.08 16.28,2.83" fill="#F7D23E" stroke="#D9A21B" stroke-width="0.8"/></svg>
<svg class="a" style="left:234px;top:332px" width="8" height="12" viewBox="0 0 8 12"><path d="M1,1 L6,5 L1,9 Z" fill="#E6E6E6"/><path d="M1,11 L7,5.5" stroke="#555" stroke-width="1"/></svg>
<svg class="a" style="left:234px;top:357px" width="8" height="12" viewBox="0 0 8 12"><path d="M1,1 L6,5 L1,9 Z" fill="#E6E6E6"/><path d="M1,11 L7,5.5" stroke="#555" stroke-width="1"/></svg>

</body></html>
